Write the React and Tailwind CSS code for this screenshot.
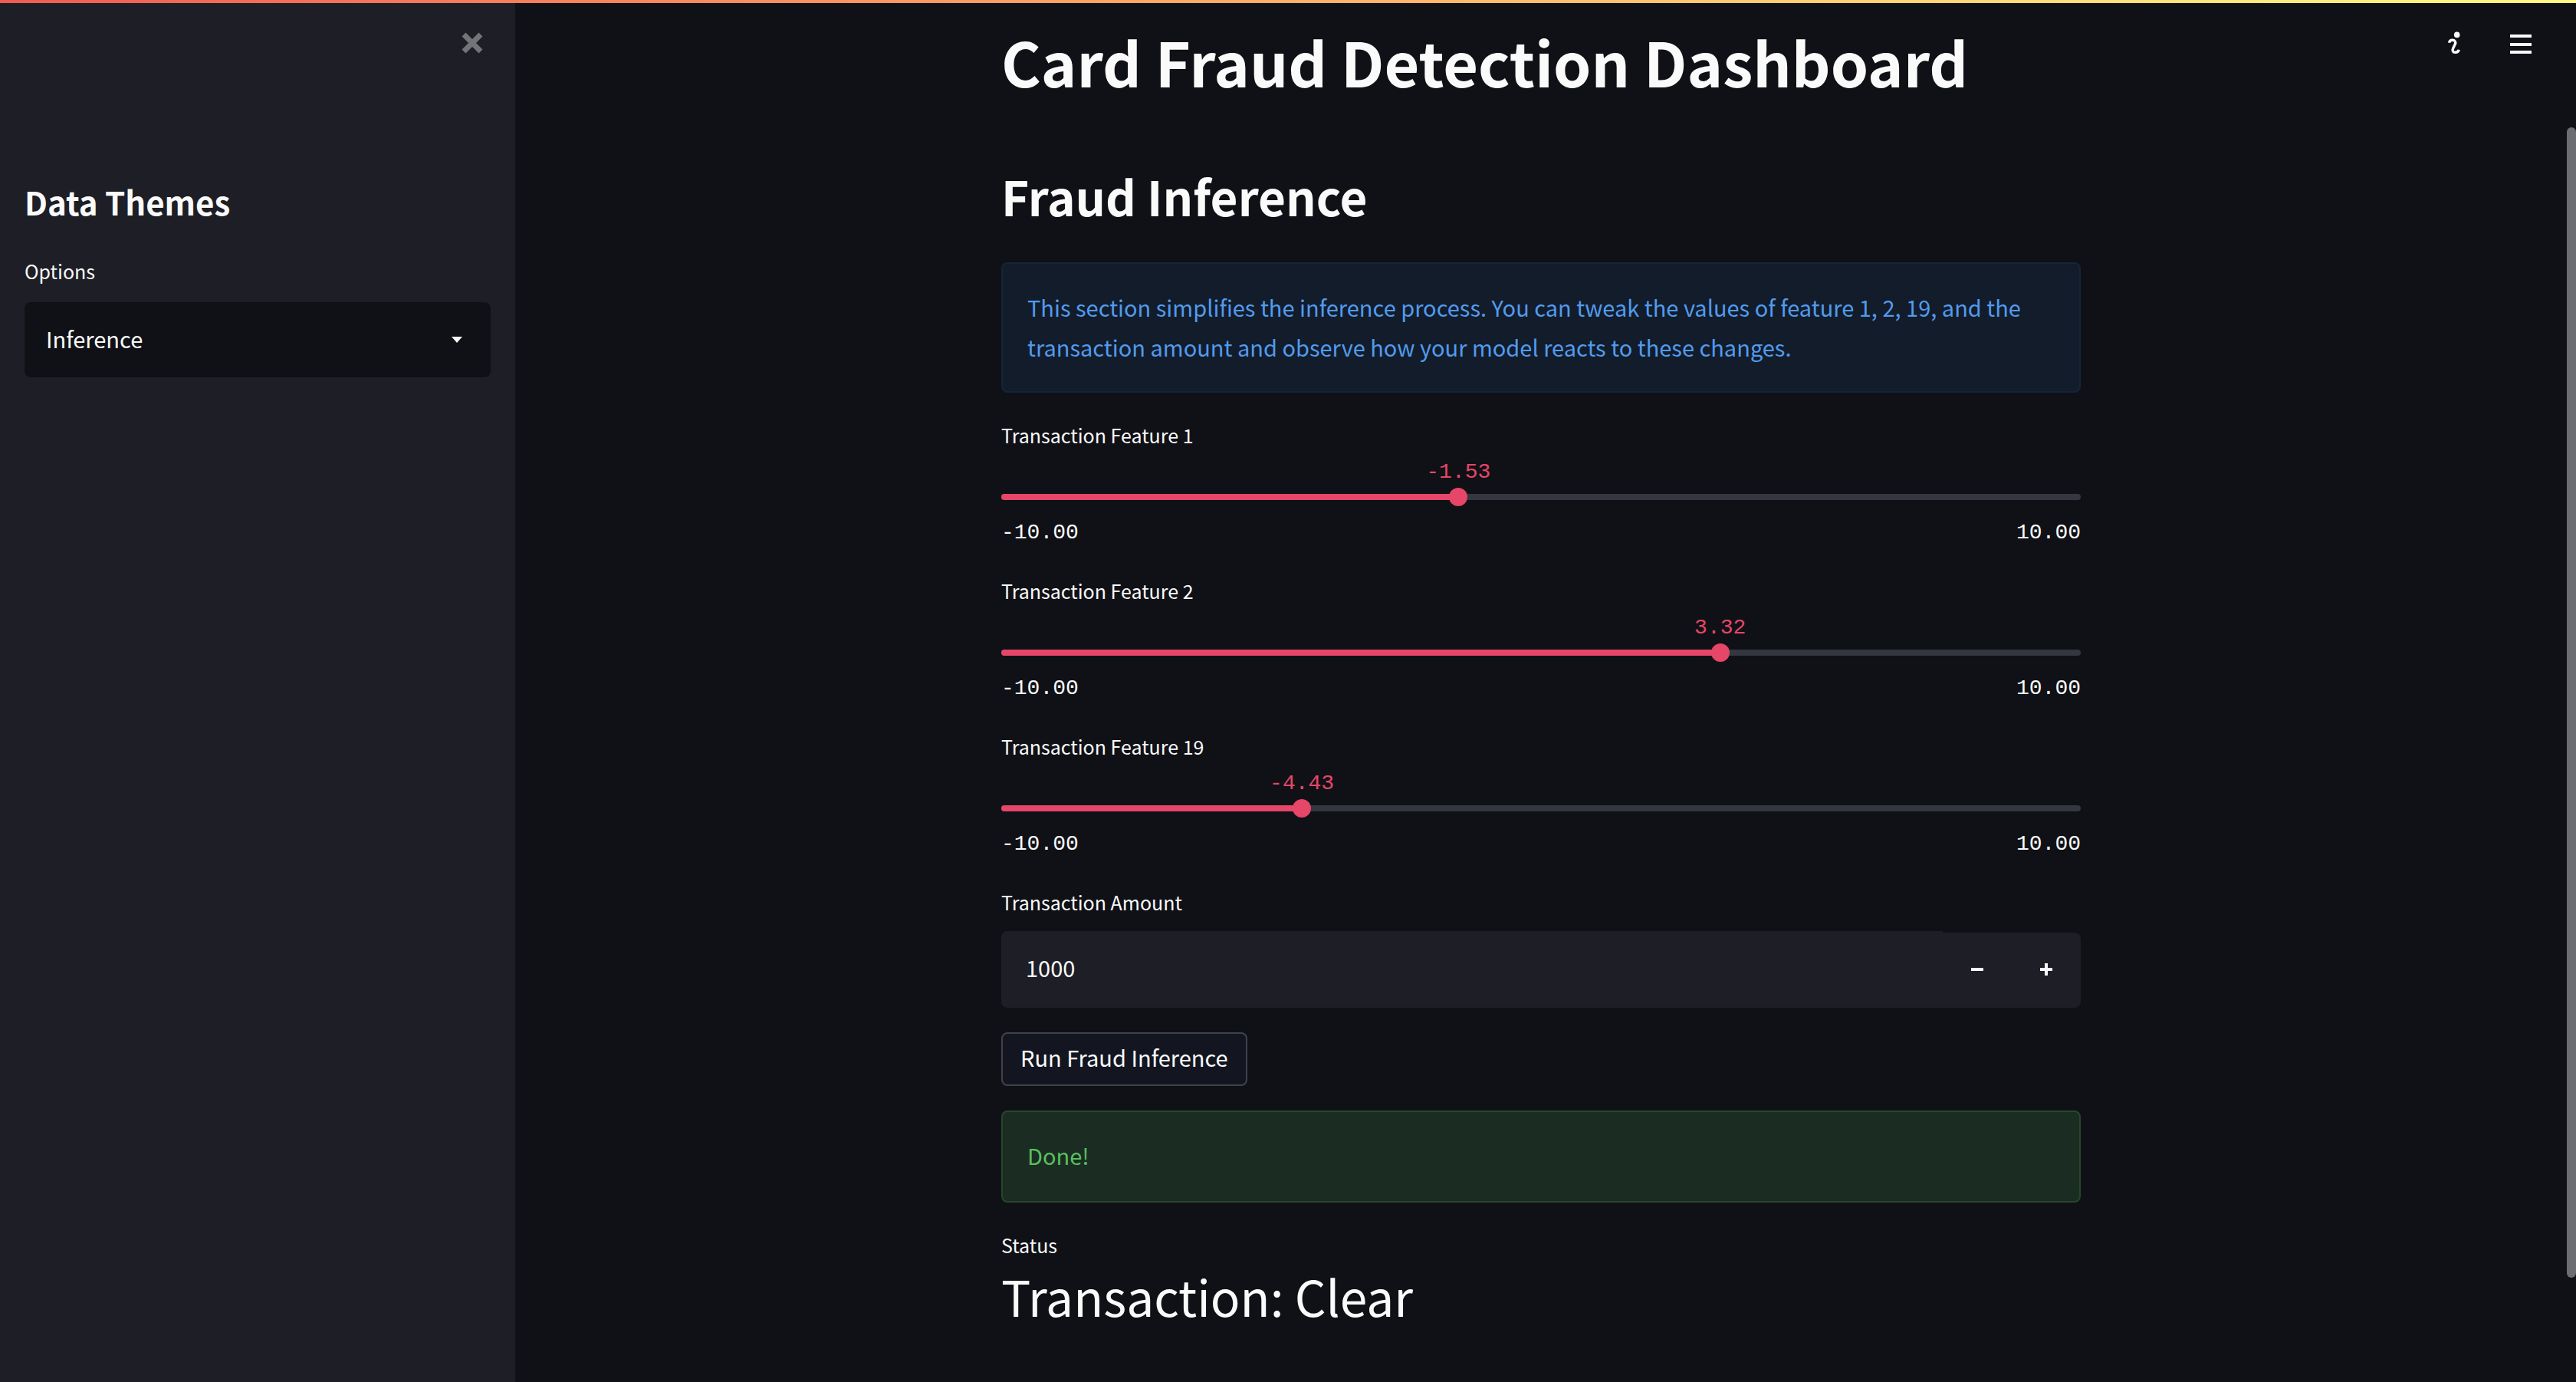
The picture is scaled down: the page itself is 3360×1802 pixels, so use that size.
import { useState } from "react";

const MIN = -10;
const MAX = 10;

function FieldLabel({ htmlFor, children }) {
  return (
    <label htmlFor={htmlFor} className="block text-[25px] leading-[46px]">
      {children}
    </label>
  );
}

function FeatureSlider({ id, label, initial }) {
  const [value, setValue] = useState(initial);
  const percent = ((value - MIN) / (MAX - MIN)) * 100;
  return (
    <div>
      <FieldLabel htmlFor={id}>{label}</FieldLabel>
      <div className="relative mt-[6px] h-10 font-['Liberation_Mono',monospace] text-[28px] leading-10 text-[#e64668]">
        <output
          htmlFor={id}
          className="absolute top-0 -translate-x-1/2"
          style={{ left: `${percent}%` }}
        >
          {value.toFixed(2)}
        </output>
      </div>
      <div className="relative flex h-6 items-center">
        <div className="h-2 w-full overflow-hidden rounded bg-[#353740]">
          <div className="h-full bg-[#e64668]" style={{ width: `${percent}%` }} />
        </div>
        <input
          id={id}
          type="range"
          min={MIN}
          max={MAX}
          step={0.01}
          value={value}
          onChange={(e) => setValue(Number(e.target.value))}
          className="absolute -left-3 top-0 m-0 h-6 w-[calc(100%+24px)] cursor-pointer appearance-none bg-transparent outline-none [&::-webkit-slider-thumb]:size-6 [&::-webkit-slider-thumb]:appearance-none [&::-webkit-slider-thumb]:rounded-full [&::-webkit-slider-thumb]:bg-[#e64668]"
        />
      </div>
      <div className="mt-[14px] flex justify-between font-['Liberation_Mono',monospace] text-[28px] leading-[41px]">
        <span>{MIN.toFixed(2)}</span>
        <span>{MAX.toFixed(2)}</span>
      </div>
    </div>
  );
}

function Sidebar() {
  return (
    <aside className="flex w-1/5 shrink-0 flex-col bg-[#1e1e26] px-8">
      <div className="flex h-[234px] justify-end pt-[41px] pr-[9px]">
        <button type="button" aria-label="Close sidebar" className="size-[30px] text-[#737477]">
          <svg viewBox="0 0 30 30" className="size-full" fill="none" stroke="currentColor" strokeWidth="7">
            <path d="M4 4l22 22M26 4L4 26" />
          </svg>
        </button>
      </div>
      <h2 className="text-[42px] leading-[58px] font-semibold">Data Themes</h2>
      <div className="mt-[38px]">
        <FieldLabel htmlFor="options">Options</FieldLabel>
        <div className="relative mt-[18px]">
          <select
            id="options"
            defaultValue="Inference"
            className="block h-[98px] w-full appearance-none rounded-lg bg-[#101116] pr-16 pb-[2px] pl-7 text-[29px] outline-none"
          >
            <option>Inference</option>
          </select>
          <svg viewBox="0 0 14 8" className="pointer-events-none absolute top-[45px] right-[37px] h-2 w-[14px]" fill="currentColor">
            <path d="M0 0h14L7 8z" />
          </svg>
        </div>
      </div>
    </aside>
  );
}

function Toolbar() {
  return (
    <div className="absolute top-10 right-[58px] flex gap-16">
      <button type="button" aria-label="Running status" className="h-8 w-5">
        <svg viewBox="0 0 20 32" className="h-8 w-5" fill="none" stroke="currentColor" strokeWidth="3.4">
          <circle cx="14.7" cy="5.4" r="3.8" fill="currentColor" stroke="none" />
          <path d="M4.6 15.8C5 13.4 6.8 12.3 8.8 12.3C12 12.3 13.6 14.6 12.3 17.6L9.8 22.8C8.2 26 9.4 28.3 12.4 28.3C15 28.3 16.9 27.2 17.2 24.8" />
        </svg>
      </button>
      <button type="button" aria-label="Menu" className="h-8 w-7">
        <svg viewBox="0 0 28 32" className="h-8 w-7" fill="currentColor">
          <path d="M0 5h28v4H0zM0 16h28v4H0zM0 26h28v4H0z" />
        </svg>
      </button>
    </div>
  );
}

export default function App() {
  const [amount, setAmount] = useState(1000);
  return (
    <div className="relative flex min-h-screen bg-[#101116] font-['Noto_Sans_CJK_SC','Noto_Sans',sans-serif] text-[#fafafa]">
      <div className="absolute inset-x-0 top-0 z-10 h-1 bg-linear-to-r from-[#f05c52] to-[#fffa85]" />
      <Sidebar />
      <main className="min-w-0 flex-1 px-8 pt-7">
        <div className="mx-auto max-w-[1408px]">
          <h1 className="text-[79px] leading-[104px] font-bold">Card Fraud Detection Dashboard</h1>
          <h2 className="mt-20 text-[62px] leading-[86px] font-semibold">Fraud Inference</h2>
          <div className="mt-11 flex flex-col gap-8">
            <p className="rounded-lg border-2 border-[#14253b] bg-[#131c2a] px-8 pt-[30px] pb-8 text-[29px] leading-[52px] text-[#519bee]">
              This section simplifies the inference process. You can tweak the values of feature 1, 2, 19, and the
              transaction amount and observe how your model reacts to these changes.
            </p>
            <FeatureSlider id="feature-1" label="Transaction Feature 1" initial={-1.53} />
            <FeatureSlider id="feature-2" label="Transaction Feature 2" initial={3.32} />
            <FeatureSlider id="feature-19" label="Transaction Feature 19" initial={-4.43} />
            <div>
              <FieldLabel htmlFor="amount">Transaction Amount</FieldLabel>
              <div className="mt-[15px] flex h-[100px] items-end">
                <input
                  id="amount"
                  type="text"
                  inputMode="numeric"
                  value={amount}
                  onChange={(e) => setAmount(Number(e.target.value) || 0)}
                  className="h-full min-w-0 flex-1 rounded-l-lg bg-[#1e1e26] px-8 pb-[6px] text-[29px] outline-none"
                />
                <div className="flex h-[98px] rounded-r-lg bg-[#1e1e26] pb-[2px]">
                  <button
                    type="button"
                    aria-label="Decrease amount"
                    onClick={() => setAmount(amount - 1)}
                    className="flex w-[90px] items-center justify-center"
                  >
                    <svg viewBox="0 0 16 16" className="size-4" fill="currentColor">
                      <path d="M0 6h16v4H0z" />
                    </svg>
                  </button>
                  <button
                    type="button"
                    aria-label="Increase amount"
                    onClick={() => setAmount(amount + 1)}
                    className="flex w-[90px] items-center justify-center"
                  >
                    <svg viewBox="0 0 16 16" className="size-4" fill="currentColor">
                      <path d="M0 6h6V0h4v6h6v4h-6v6H6v-6H0z" />
                    </svg>
                  </button>
                </div>
              </div>
            </div>
            <button
              type="button"
              className="h-[70px] self-start rounded-lg border-2 border-[#414249] bg-[#131620] px-[23px] pb-1 text-[29px]"
            >
              Run Fraud Inference
            </button>
            <p
              role="status"
              className="min-h-[120px] rounded-lg border-2 border-[#25472b] bg-[#1b2c22] px-8 pt-[30px] text-[29px] leading-[52px] text-[#58c05f]"
            >
              Done!
            </p>
            <div>
              <p className="text-[25px] leading-[46px]">Status</p>
              <p className="text-[64px] leading-[86px]">Transaction: Clear</p>
            </div>
          </div>
        </div>
      </main>
      <div className="w-3 shrink-0 pt-[166px]">
        <div className="h-[1500px] rounded-full bg-[#6c6d71]" />
      </div>
      <Toolbar />
    </div>
  );
}
